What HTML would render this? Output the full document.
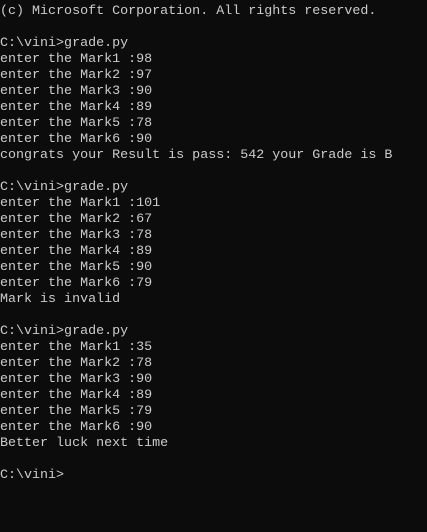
<!DOCTYPE html>
<html><head><style>
html,body{margin:0;padding:0;background:#0c0c0c;width:427px;height:532px;overflow:hidden}
pre{margin:0;position:absolute;left:0;top:4px;color:#cccccc;font-family:"Liberation Mono",monospace;font-size:13.35px;line-height:16px}
</style></head><body>
<pre>(c) Microsoft Corporation. All rights reserved.

C:\vini&gt;grade.py
enter the Mark1 :98
enter the Mark2 :97
enter the Mark3 :90
enter the Mark4 :89
enter the Mark5 :78
enter the Mark6 :90
congrats your Result is pass: 542 your Grade is B

C:\vini&gt;grade.py
enter the Mark1 :101
enter the Mark2 :67
enter the Mark3 :78
enter the Mark4 :89
enter the Mark5 :90
enter the Mark6 :79
Mark is invalid

C:\vini&gt;grade.py
enter the Mark1 :35
enter the Mark2 :78
enter the Mark3 :90
enter the Mark4 :89
enter the Mark5 :79
enter the Mark6 :90
Better luck next time

C:\vini&gt;</pre>
</body></html>
